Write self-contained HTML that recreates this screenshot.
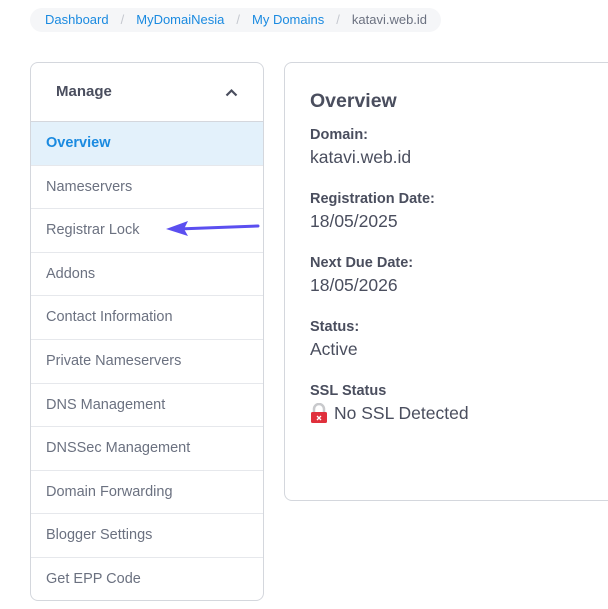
<!DOCTYPE html>
<html><head><style>
*{box-sizing:border-box;margin:0;padding:0}
body{width:608px;height:609px;background:#fff;font-family:"Liberation Sans",sans-serif;position:relative;overflow:hidden}
.bc{position:absolute;left:30px;top:8px;width:411px;height:24px;background:#f5f6f8;border-radius:12px;font-size:13px;line-height:24px;padding-left:15px;color:#6b7180;white-space:nowrap}
.bc a{color:#1a8ae0;text-decoration:none}
.bc .s{color:#c5c8cf;margin:0 12px}
.side{position:absolute;left:30px;top:62px;width:234px;height:539px;border:1px solid #d4d7dd;border-radius:8px;overflow:hidden;background:#fff}
.hd{height:59px;border-bottom:1px solid #d4d7dd;padding-left:25px;font-weight:bold;font-size:15px;color:#4a4e5e;line-height:57px;position:relative}
.it{height:43.6px;border-bottom:1px solid #e6e8ec;padding-left:15px;font-size:14.5px;color:#6b7180;line-height:42px}
.it:last-child{border-bottom:none}
.it.a{background:#e3f1fb;color:#1a8ae0;font-weight:bold}
.card{position:absolute;left:284px;top:62px;width:340px;height:439px;border:1px solid #d4d7dd;border-radius:8px;padding:27px 25px;color:#4a4e5e}
h2{font-size:19.5px;font-weight:bold;margin-bottom:13px}
.l{font-size:14.5px;font-weight:bold;line-height:18px}
.v{font-size:17.5px;line-height:26px;margin-bottom:20px}
</style></head><body>
<div class="bc"><a>Dashboard</a><span class="s">/</span><a>MyDomaiNesia</a><span class="s">/</span><a>My Domains</a><span class="s">/</span>katavi.web.id</div>
<div class="side">
<div class="hd">Manage<svg style="position:absolute;left:194px;top:25px" width="13" height="9" viewBox="0 0 13 9"><path d="M1.5 7.5L6.5 2.5L11.5 7.5" stroke="#4a4e5e" stroke-width="2.2" fill="none"/></svg></div>
<div class="it a">Overview</div>
<div class="it">Nameservers</div>
<div class="it">Registrar Lock</div>
<div class="it">Addons</div>
<div class="it">Contact Information</div>
<div class="it">Private Nameservers</div>
<div class="it">DNS Management</div>
<div class="it">DNSSec Management</div>
<div class="it">Domain Forwarding</div>
<div class="it">Blogger Settings</div>
<div class="it">Get EPP Code</div>
</div>
<svg style="position:absolute;left:164px;top:218px" width="96" height="20" viewBox="0 0 96 20"><path d="M94 8L14 11" stroke="#5b4ff0" stroke-width="3" stroke-linecap="round"/><path d="M2 11L24 3L20 11L24 18Z" fill="#5b4ff0"/></svg>
<div class="card">
<h2>Overview</h2>
<div class="l">Domain:</div><div class="v">katavi.web.id</div>
<div class="l">Registration Date:</div><div class="v">18/05/2025</div>
<div class="l">Next Due Date:</div><div class="v">18/05/2026</div>
<div class="l">Status:</div><div class="v">Active</div>
<div class="l">SSL Status</div>
<div class="v" style="display:flex;align-items:center"><svg width="18" height="21" viewBox="0 0 18 21" style="margin-right:6px"><path d="M4 10V6a5 5 0 0 1 10 0v4" stroke="#c8c9cc" stroke-width="2.5" fill="none"/><rect x="1" y="9" width="16" height="11" rx="1.5" fill="#e0303c"/><path d="M7 13l4 4M11 13l-4 4" stroke="#fff" stroke-width="1.3"/></svg>No SSL Detected</div>
</div>
</body></html>
